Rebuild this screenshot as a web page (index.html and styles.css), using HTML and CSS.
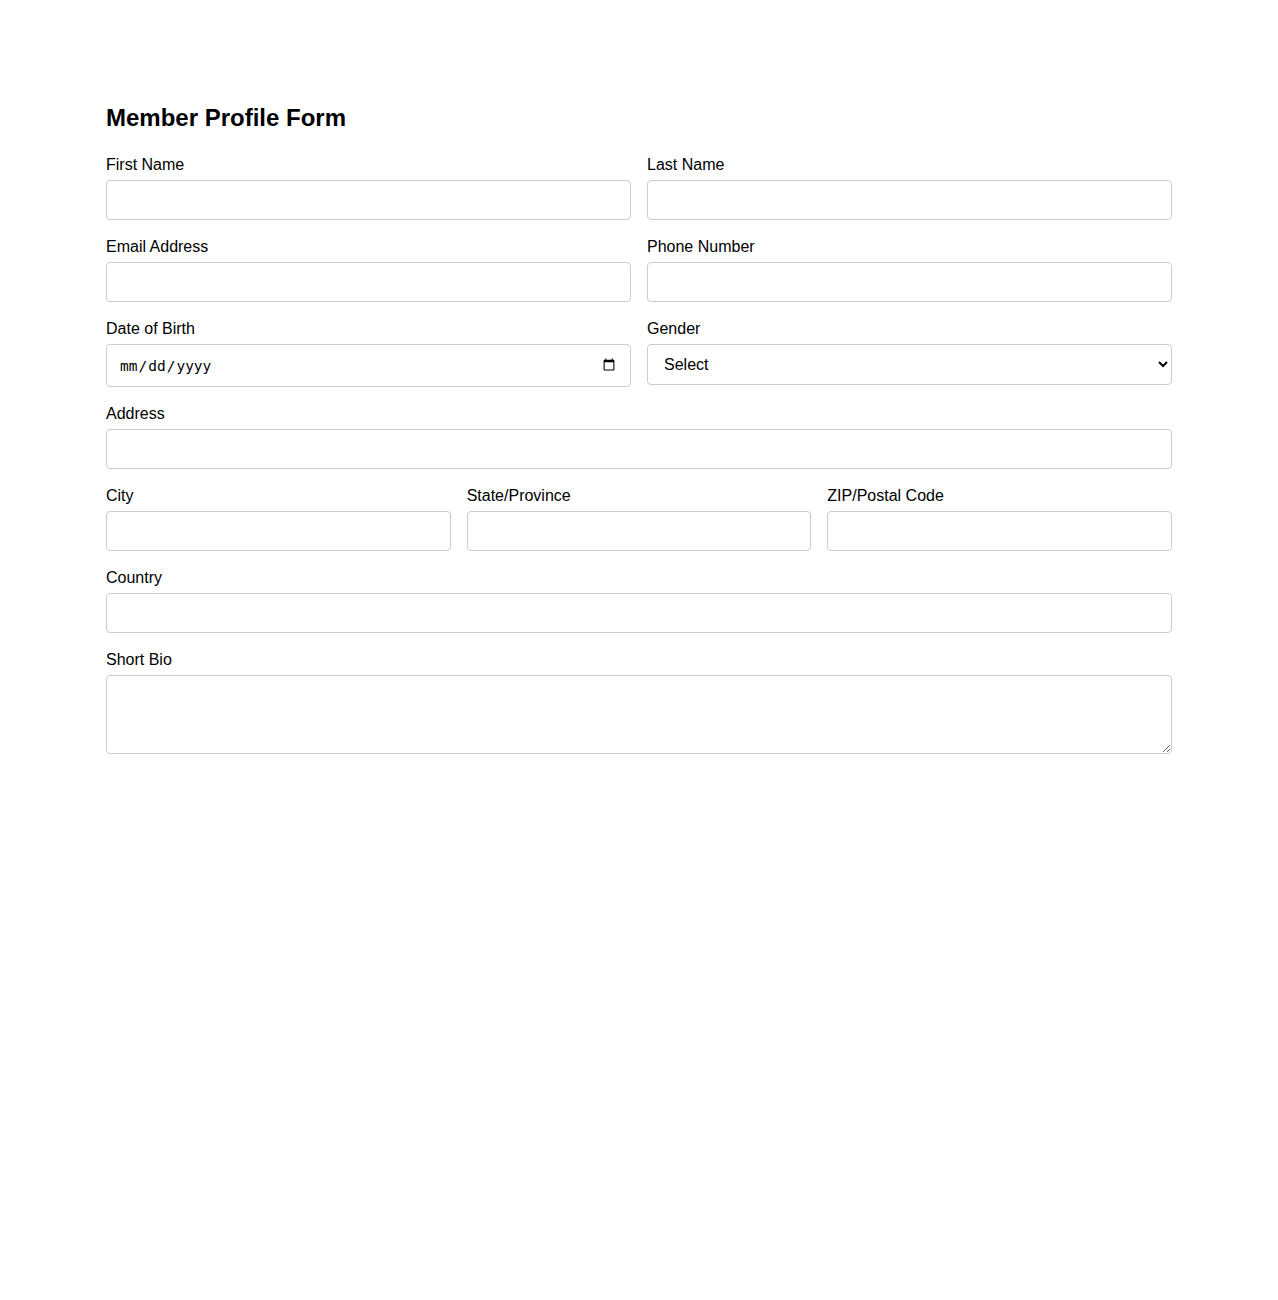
FILE: index.html
```html
<!DOCTYPE html>
<html lang="en">
<head>
    <meta charset="UTF-8">
    <meta name="viewport" content="width=device-width, initial-scale=1.0">
    <title>Member Profile Form</title>
    <link rel="stylesheet" href="styles.css">
</head>
<body>
    <div class="container">
        <h2>Member Profile Form</h2>

        <form class="profile-form">
            <!-- Name -->
            <div class="row two">
                <div class="field">
                    <label for="firstName">First Name</label>
                    <input type="text" id="firstName">
                </div>
                <div class="field">
                    <label for="lastName">Last Name</label>
                    <input type="text" id="lastName">
                </div>
            </div>

            <!-- Contact -->
            <div class="row two">
                <div class="field">
                    <label for="email">Email Address</label>
                    <input type="email" id="email">
                </div>
                <div class="field">
                    <label for="phone">Phone Number</label>
                    <input type="tel" id="phone">
                </div>
            </div>

            <div class="row two">
                <div class="field">
                    <label for="dob">Date of Birth</label>
                    <input type="date" id="dob">
                </div>
                <div class="field">
                    <label for="gender">Gender</label>
                    <select id="gender">
                        <option value="">Select</option>
                        <option value="male">Male</option>
                        <option value="female">Female</option>
                        <option value="other">Other</option>
                    </select>
                </div>
            </div>

            <!-- Address -->
            <div class="field">
                <label for="address">Address</label>
                <input type="text" id="address">
            </div>

            <div class="row three">
                <div class="field">
                    <label for="city">City</label>
                    <input type="text" id="city">
                </div>
                <div class="field">
                    <label for="state">State/Province</label>
                    <input type="text" id="state">
                </div>
                <div class="field">
                    <label for="zip">ZIP/Postal Code</label>
                    <input type="text" id="zip">
                </div>
            </div>

            <div class="field">
                <label for="country">Country</label>
                <input type="text" id="country">
            </div>

            <div class="field">
                <label for="bio">Short Bio</label>
                <textarea id="bio" rows="3"></textarea>
            </div>
        </form>
    </div>
</body>
</html>
```

FILE: styles.css
```css
body {
    font-family: "Liberation Sans", Arial, sans-serif;
    margin: 0;
    padding: 0;
    background-color: #fff;
    color: #000;
}

.container {
    max-width: 1066px;
    margin: 0 auto;
    padding: 104px 0 40px;
}

h2 {
    font-size: 24px;
    margin: 0 0 24px;
}

.row {
    display: grid;
    column-gap: 16px;
}

.row.two {
    grid-template-columns: 1fr 1fr;
}

.row.three {
    grid-template-columns: 1fr 1fr 1fr;
}

.field {
    margin-bottom: 18px;
}

label {
    display: block;
    font-size: 16px;
    margin-bottom: 6px;
}

input, select, textarea {
    display: block;
    width: 100%;
    box-sizing: border-box;
    padding: 10px 12px;
    font-family: inherit;
    font-size: 16px;
    border: 1px solid #ccc;
    border-radius: 4px;
    background-color: #fff;
}

input[type="date"] {
    height: 43px;
    font-family: "DejaVu Sans Mono", monospace;
    font-size: 14.5px;
}

textarea {
    height: 79px;
    resize: vertical;
}
```
